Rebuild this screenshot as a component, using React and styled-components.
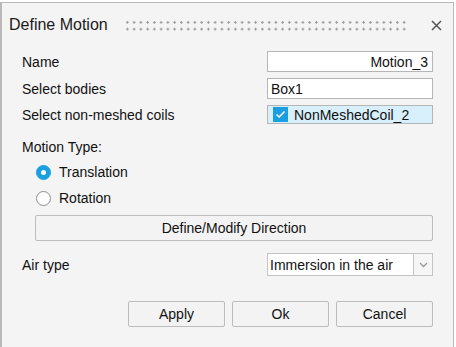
import React from "react";
import styled, { createGlobalStyle } from "styled-components";

const GlobalStyle = createGlobalStyle`
  html, body {
    margin: 0;
    padding: 0;
    background: #ffffff;
  }
  body {
    font-family: "Liberation Sans", Arial, sans-serif;
    color: #111;
  }
`;

const Page = styled.div`
  width: 456px;
  height: 347px;
  padding-top: 2px;
  box-sizing: border-box;
  overflow: hidden;
`;

const Dialog = styled.div`
  width: 454px;
  height: 347px;
  box-sizing: border-box;
  background: #f4f4f4;
  border: 1px solid #b9b9b9;
  border-bottom: none;
  border-left-width: 2px;
  display: flex;
  flex-direction: column;
`;

const TitleBar = styled.div`
  height: 44px;
  display: flex;
  align-items: center;
  padding: 0 11px 0 7px;
  gap: 16px;
`;

const Title = styled.div`
  font-size: 16px;
  color: #1a1a1a;
  white-space: nowrap;
`;

const Grip = styled.div`
  flex: 1;
  height: 14px;
  margin-top: 2px;
  margin-right: 6px;
  background-image: radial-gradient(circle, #9c9c9c 1px, transparent 1.4px);
  background-size: 6.75px 6.75px;
  background-position: 0 0;
`;

const CloseIcon = () => (
  <svg width="11" height="11" viewBox="0 0 11 11">
    <path d="M1 1 L10 10 M10 1 L1 10" stroke="#555" strokeWidth="1.5" fill="none" />
  </svg>
);

const Body = styled.div`
  display: flex;
  flex-direction: column;
  padding: 4px 20px 0 20px;
`;

const FieldRow = styled.div`
  display: flex;
  align-items: center;
  justify-content: space-between;
  height: 21px;
  margin-bottom: ${(p) => (p.$gap === undefined ? 6 : p.$gap)}px;
`;

const Label = styled.div`
  font-size: 14px;
  white-space: nowrap;
`;

const TextBox = styled.div`
  width: 166px;
  height: ${(p) => (p.$selected ? 19 : 21)}px;
  box-sizing: border-box;
  border: 1px solid #b5b5b5;
  background: ${(p) => (p.$selected ? "#d8f0fb" : "#ffffff")};
  font-size: 14px;
  display: flex;
  align-items: center;
  justify-content: ${(p) => (p.$right ? "flex-end" : "flex-start")};
  padding: 0 4px 0 3px;
  gap: 6px;
`;

const CheckMark = styled.div`
  width: 15px;
  height: 15px;
  background: #1a9fe2;
  display: flex;
  align-items: center;
  justify-content: center;
  margin-left: 2px;
`;

const SectionLabel = styled(Label)`
  margin-top: 14px;
  margin-bottom: 8px;
`;

const RadioRow = styled.label`
  display: flex;
  align-items: center;
  gap: 8px;
  height: 18px;
  margin-left: 14px;
  margin-bottom: 8px;
  font-size: 14px;
`;

const RadioDot = styled.span`
  width: 15px;
  height: 15px;
  box-sizing: border-box;
  border-radius: 50%;
  background: ${(p) => (p.$on ? "#1a9fe2" : "#ffffff")};
  border: 1px solid ${(p) => (p.$on ? "#1a9fe2" : "#8c8c8c")};
  display: flex;
  align-items: center;
  justify-content: center;
  &::after {
    content: "";
    display: ${(p) => (p.$on ? "block" : "none")};
    width: 5px;
    height: 5px;
    border-radius: 50%;
    background: #ffffff;
  }
`;

const Button = styled.button`
  font-family: "Liberation Sans", Arial, sans-serif;
  font-size: 14px;
  color: #111;
  background: #f3f3f3;
  border: 1px solid #bdbdbd;
  border-radius: 2px;
  height: 26px;
  padding: 0;
  width: ${(p) => p.$width || "97px"};
`;

const WideButton = styled(Button)`
  width: auto;
  margin-left: 13px;
  margin-top: 0px;
  margin-bottom: 13px;
`;

const SelectBox = styled.div`
  width: 166px;
  height: 23px;
  box-sizing: border-box;
  display: flex;
  border: 1px solid #c4c4c4;
  background: #fff;
`;

const SelectText = styled.div`
  flex: 1;
  font-size: 14px;
  display: flex;
  align-items: center;
  padding-left: 2px;
  border-right: 1px solid #c4c4c4;
`;

const SelectArrow = styled.div`
  width: 18px;
  display: flex;
  align-items: center;
  justify-content: center;
  background: #f6f6f6;
`;

const Footer = styled.div`
  display: flex;
  justify-content: flex-end;
  gap: 7px;
  margin-top: 20px;
`;

export default function App() {
  return (
    <>
      <GlobalStyle />
      <Page>
        <Dialog>
          <TitleBar>
            <Title>Define Motion</Title>
            <Grip />
            <CloseIcon />
          </TitleBar>
          <Body>
            <FieldRow>
              <Label>Name</Label>
              <TextBox $right>Motion_3</TextBox>
            </FieldRow>
            <FieldRow $gap={5}>
              <Label>Select bodies</Label>
              <TextBox>Box1</TextBox>
            </FieldRow>
            <FieldRow $gap={0}>
              <Label>Select non-meshed coils</Label>
              <TextBox $selected>
                <CheckMark>
                  <svg width="11" height="9" viewBox="0 0 11 9">
                    <path d="M1.5 4.5 L4.2 7 L9.5 1.5" stroke="#fff" strokeWidth="1.6" fill="none" />
                  </svg>
                </CheckMark>
                NonMeshedCoil_2
              </TextBox>
            </FieldRow>
            <SectionLabel>Motion Type:</SectionLabel>
            <RadioRow>
              <RadioDot $on />
              Translation
            </RadioRow>
            <RadioRow>
              <RadioDot />
              Rotation
            </RadioRow>
            <WideButton>Define/Modify Direction</WideButton>
            <FieldRow>
              <Label>Air type</Label>
              <SelectBox>
                <SelectText>Immersion in the air</SelectText>
                <SelectArrow>
                  <svg width="9" height="6" viewBox="0 0 9 6">
                    <path d="M1 1 L4.5 4.5 L8 1" stroke="#999" strokeWidth="1.3" fill="none" />
                  </svg>
                </SelectArrow>
              </SelectBox>
            </FieldRow>
            <Footer>
              <Button>Apply</Button>
              <Button>Ok</Button>
              <Button>Cancel</Button>
            </Footer>
          </Body>
        </Dialog>
      </Page>
    </>
  );
}
